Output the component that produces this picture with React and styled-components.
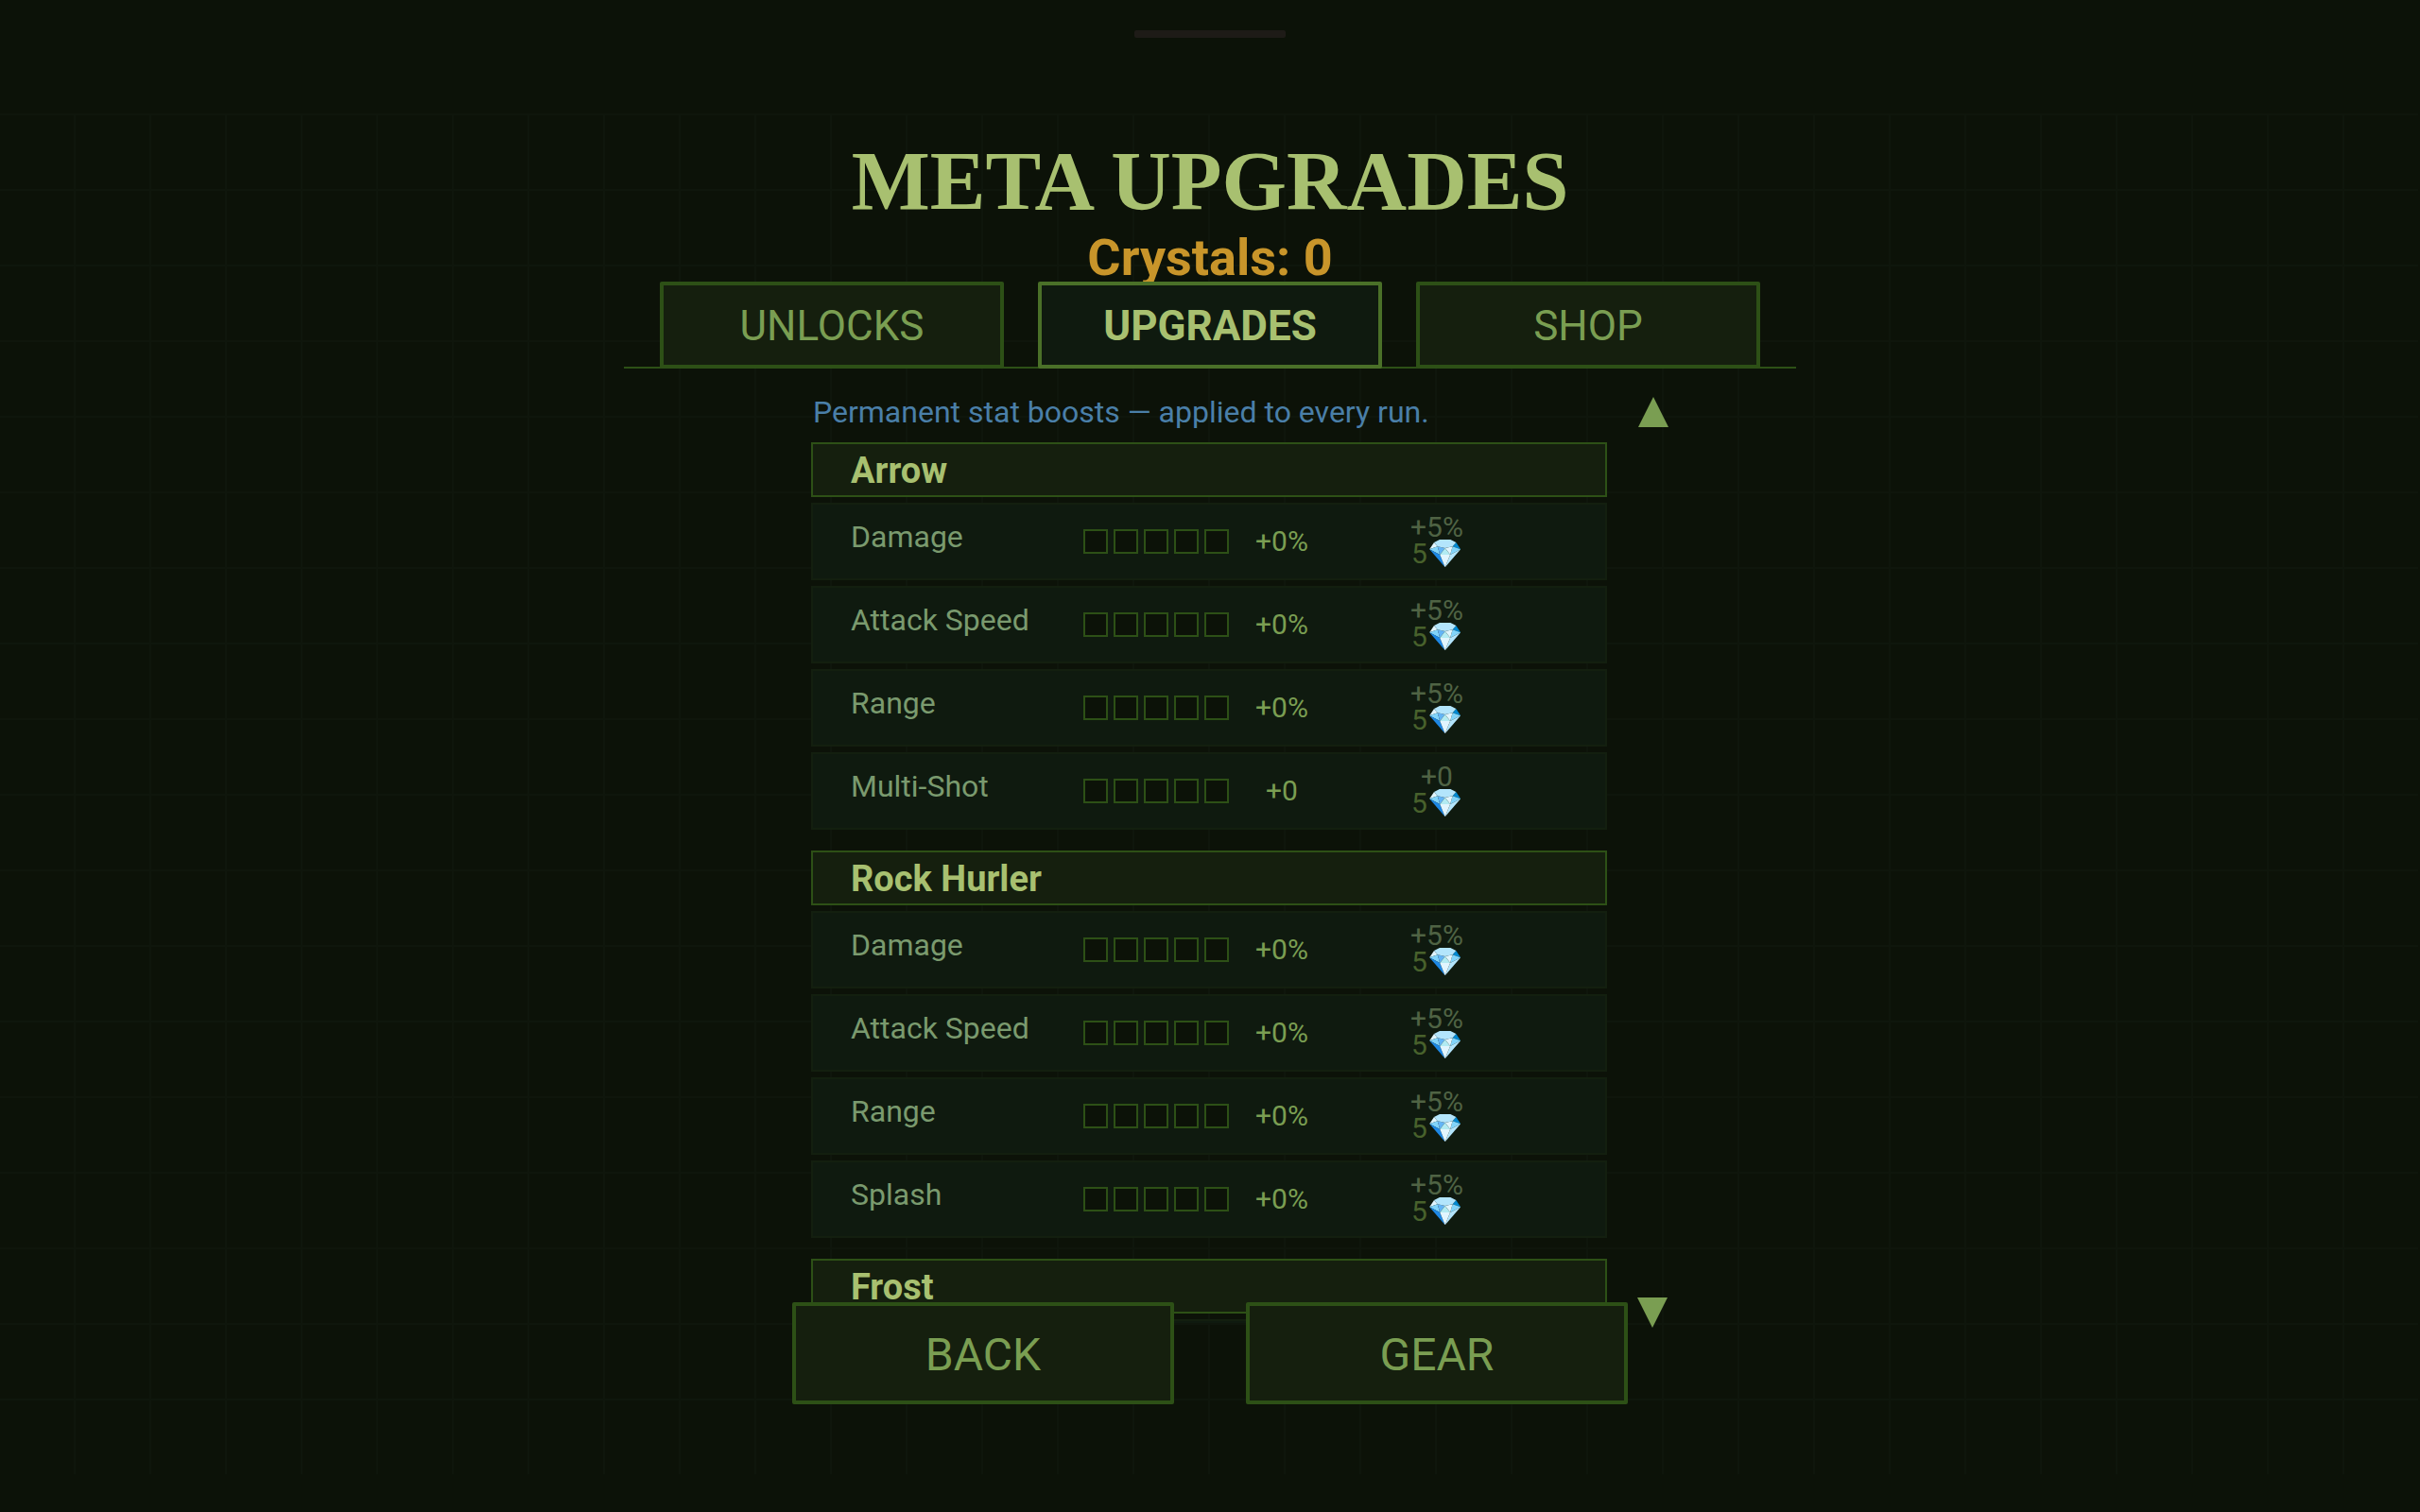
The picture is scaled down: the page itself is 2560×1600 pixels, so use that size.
import React, { useState } from "react";
import styled, { createGlobalStyle } from "styled-components";

const color = {
  page: "#0c1208",
  grid: "#0f160c",
  surface: "#151f0e",
  row: "#0f1a0f",
  rowLine: "#131f0f",
  line: "#2d5016",
  lineActive: "#4a7028",
  text: "#7a9e52",
  bright: "#a8c070",
  label: "#7a9a6e",
  gold: "#c8952a",
  blue: "#4a7fa8",
  mutedGain: "#4f6344",
  mutedCost: "#48612c",
};

const GlobalStyle = createGlobalStyle`
  * { box-sizing: border-box; }
  body { margin: 0; background: ${color.page}; }
  button { font: inherit; cursor: pointer; }
`;

const Page = styled.main`
  display: flex;
  flex-direction: column;
  align-items: center;
  min-height: 100vh;
  font-family: Roboto, "Liberation Sans", sans-serif;
  color: ${color.text};
  background-color: ${color.page};
`;

const Handle = styled.div`
  width: 160px;
  height: 8px;
  margin: 32px 0 80px;
  border-radius: 2px;
  background: #1e1b17;
`;

const Board = styled.div`
  display: flex;
  flex-direction: column;
  align-items: center;
  align-self: stretch;
  flex: 1;
  margin-bottom: 40px;
  padding-top: 20px;
  background-image:
    linear-gradient(${color.page}, ${color.page}),
    linear-gradient(to right, transparent 78px, ${color.grid} 78px),
    linear-gradient(to bottom, ${color.grid} 2px, transparent 2px);
  background-size: 2px 100%, 80px 80px, 80px 80px;
  background-position: right top, left top, left top;
  background-repeat: no-repeat, repeat, repeat;
`;

const Title = styled.h1`
  margin: 0;
  font-family: "Liberation Serif", serif;
  font-size: 88px;
  line-height: 104px;
  font-weight: 700;
  color: ${color.bright};
`;

const Crystals = styled.p`
  margin: 0 0 -4px;
  font-size: 54px;
  line-height: 58px;
  font-weight: 700;
  color: ${color.gold};
`;

const Tabs = styled.nav`
  display: flex;
  justify-content: center;
  gap: 36px;
  width: 1240px;
  max-width: 100%;
  background: linear-gradient(${color.line}, ${color.line}) bottom / 100% 2px no-repeat;
`;

const PanelButton = styled.button`
  padding: 2px 0 0;
  border: 4px solid ${(p) => (p.$active ? color.lineActive : color.line)};
  border-radius: 2px;
  background: ${(p) => (p.$active ? color.row : color.surface)};
  color: ${(p) => (p.$active ? color.bright : color.text)};
  font-weight: ${(p) => (p.$active ? 700 : 400)};
`;

const Tab = styled(PanelButton)`
  width: 364px;
  height: 92px;
  font-size: 44px;
`;

const ListArea = styled.section`
  display: grid;
  grid-template-columns: 1fr 844px 1fr;
  align-self: stretch;
  height: calc(100vh - 600px);
  margin-top: 10px;
`;

const List = styled.div`
  grid-column: 2;
  overflow: hidden;
  padding-right: 2px;
`;

const Intro = styled.p`
  margin: 0;
  padding: 16px 2px 12px;
  font-size: 32px;
  line-height: 40px;
  color: ${color.blue};
`;

const Group = styled.section`
  display: flex;
  flex-direction: column;
  gap: 6px;
  margin-bottom: 22px;
`;

const GroupTitle = styled.h2`
  margin: 0;
  padding: 2px 40px 0;
  border: 2px solid ${color.line};
  background: ${color.surface};
  color: ${color.bright};
  font-size: 38px;
  line-height: 52px;
  font-weight: 700;
`;

const Row = styled.div`
  display: grid;
  grid-template-columns: 246px 154px 112px 216px 1fr;
  align-items: center;
  height: 82px;
  padding-left: 40px;
  border: 2px solid ${color.rowLine};
  background: ${color.row};
`;

const Label = styled.span`
  padding-bottom: 10px;
  font-size: 32px;
  line-height: 40px;
  color: ${color.label};
`;

const Pips = styled.div`
  display: flex;
  gap: 6px;
`;

const Pip = styled.span`
  width: 26px;
  height: 26px;
  border: 2px solid ${color.line};
  background: ${color.page};
`;

const Value = styled.span`
  padding-bottom: 2px;
  font-size: 30px;
  text-align: center;
`;

const Buy = styled.button`
  display: flex;
  flex-direction: column;
  align-items: center;
  padding: 0 0 2px;
  border: 0;
  background: none;
  color: ${color.mutedGain};
  font-size: 30px;
  line-height: 28px;
`;

const Cost = styled.span`
  height: 28px;
  color: ${color.mutedCost};
`;

const Scroller = styled.div`
  display: flex;
  flex-direction: column;
  justify-content: space-between;
  align-items: flex-start;
  padding: 20px 0 0 30px;
  height: calc(100% + 5px);
`;

const ArrowButton = styled.button`
  display: flex;
  padding: 0;
  border: 0;
  background: none;
  color: ${color.text};
`;

const Footer = styled.footer`
  display: flex;
  justify-content: center;
  gap: 76px;
  margin-top: -22px;
  z-index: 1;
`;

const Action = styled(PanelButton)`
  width: 404px;
  height: 108px;
  font-size: 48px;
`;

const TABS = ["UNLOCKS", "UPGRADES", "SHOP"];

const pct = (name) => ({ name, value: "+0%", gain: "+5%", cost: 5 });

const GROUPS = [
  {
    title: "Arrow",
    rows: [
      pct("Damage"),
      pct("Attack Speed"),
      pct("Range"),
      { name: "Multi-Shot", value: "+0", gain: "+0", cost: 5 },
    ],
  },
  {
    title: "Rock Hurler",
    rows: [pct("Damage"), pct("Attack Speed"), pct("Range"), pct("Splash")],
  },
  { title: "Frost", rows: [] },
];

function Arrow({ points, label }) {
  return (
    <ArrowButton aria-label={label}>
      <svg width="33" height="33" viewBox="0 0 33 33" aria-hidden="true">
        <polygon points={points} fill="currentColor" />
      </svg>
    </ArrowButton>
  );
}

function UpgradeRow({ name, value, gain, cost }) {
  return (
    <Row>
      <Label>{name}</Label>
      <Pips>
        {[0, 1, 2, 3, 4].map((i) => (
          <Pip key={i} />
        ))}
      </Pips>
      <Value>{value}</Value>
      <Buy>
        <span>{gain}</span>
        <Cost>{cost}💎</Cost>
      </Buy>
    </Row>
  );
}

export default function App() {
  const [tab, setTab] = useState("UPGRADES");
  return (
    <Page>
      <GlobalStyle />
      <Handle />
      <Board>
        <Title>META UPGRADES</Title>
        <Crystals>Crystals: 0</Crystals>
        <Tabs>
          {TABS.map((name) => (
            <Tab key={name} $active={name === tab} onClick={() => setTab(name)}>
              {name}
            </Tab>
          ))}
        </Tabs>
        <ListArea>
          <List>
            <Intro>Permanent stat boosts — applied to every run.</Intro>
            {GROUPS.map((group) => (
              <Group key={group.title}>
                <GroupTitle>{group.title}</GroupTitle>
                {group.rows.map((row) => (
                  <UpgradeRow key={row.name} {...row} />
                ))}
                {group.rows.length === 0 && <Row />}
              </Group>
            ))}
          </List>
          <Scroller>
            <Arrow label="Scroll up" points="17,0 33,32 1,32" />
            <Arrow label="Scroll down" points="0,1 32,1 16,33" />
          </Scroller>
        </ListArea>
        <Footer>
          <Action>BACK</Action>
          <Action>GEAR</Action>
        </Footer>
      </Board>
    </Page>
  );
}
